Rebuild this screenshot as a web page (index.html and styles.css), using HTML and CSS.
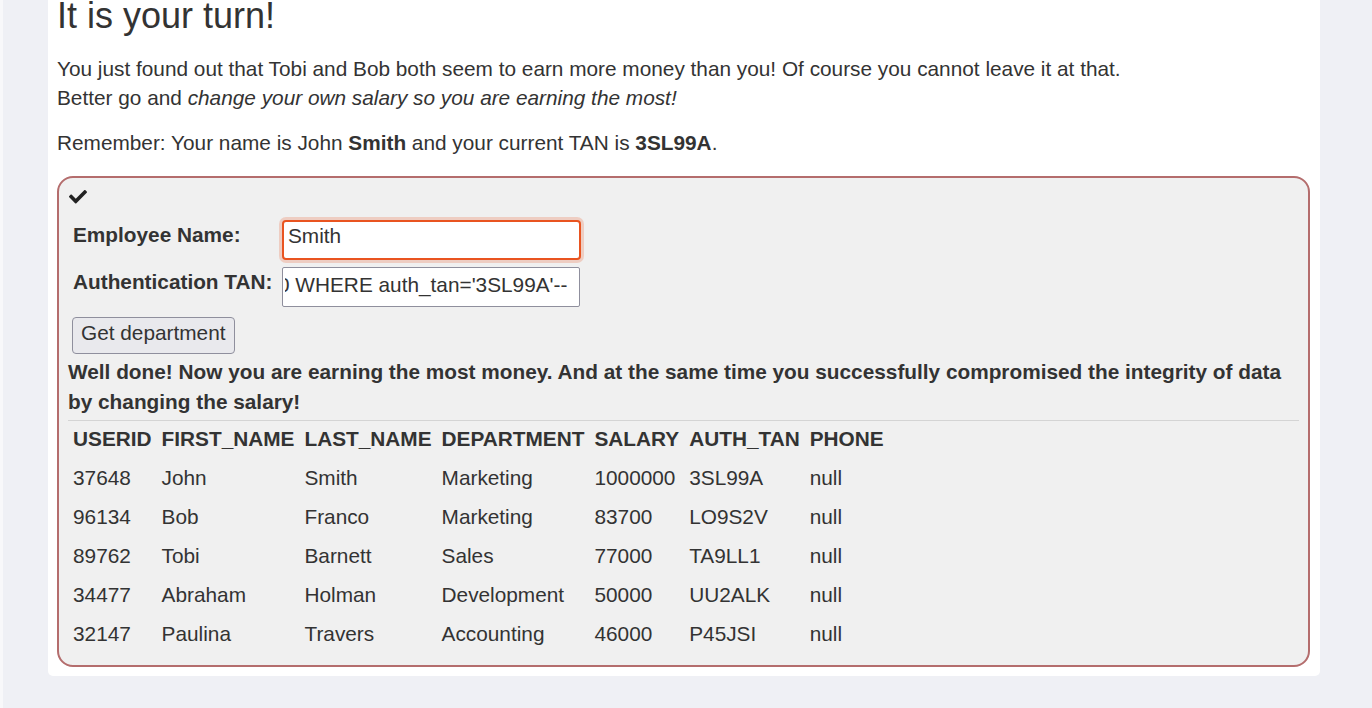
FILE: index.html
```html
<!DOCTYPE html>
<html lang="en">
<head>
<meta charset="utf-8">
<title>It is your turn!</title>
<link rel="stylesheet" href="styles.css">
</head>
<body>
<div class="page">
  <h1 class="title">It is your turn!</h1>
  <p class="intro">You just found out that Tobi and Bob both seem to earn more money than you! Of course you cannot leave it at that.<br>Better go and <em>change your own salary so you are earning the most!</em></p>
  <p class="intro">Remember: Your name is John <b>Smith</b> and your current TAN is <b>3SL99A</b>.</p>

  <div class="attack">
    <div class="check">
      <svg class="check-icon" viewBox="0 64 512 384" width="18" height="13.5" aria-hidden="true"><path fill="#222" d="M173.898 439.404l-166.4-166.4c-9.997-9.997-9.997-26.206 0-36.204l36.203-36.204c9.997-9.998 26.207-9.998 36.204 0L192 312.69 432.095 72.596c9.997-9.997 26.207-9.997 36.204 0l36.203 36.204c9.997 9.997 9.997 26.206 0 36.204l-294.4 294.401c-9.998 9.997-26.207 9.997-36.204-.001z"/></svg>
    </div>
    <form class="form">
      <div class="form-row">
        <label class="label" for="name">Employee Name:</label>
        <input class="field field-focus" id="name" type="text" value="Smith">
      </div>
      <div class="form-row row-gap">
        <label class="label" for="tan">Authentication TAN:</label>
        <input class="field field-plain" id="tan" type="text" value="0 WHERE auth_tan='3SL99A'--">
      </div>
      <button class="btn" type="button">Get department</button>
    </form>
    <div class="feedback">Well done! Now you are earning the most money. And at the same time you successfully compromised the integrity of data by changing the salary!</div>
    <hr class="rule">
    <table class="results">
      <thead>
        <tr><th>USERID</th><th>FIRST_NAME</th><th>LAST_NAME</th><th>DEPARTMENT</th><th>SALARY</th><th>AUTH_TAN</th><th>PHONE</th></tr>
      </thead>
      <tbody>
        <tr><td>37648</td><td>John</td><td>Smith</td><td>Marketing</td><td>1000000</td><td>3SL99A</td><td>null</td></tr>
        <tr><td>96134</td><td>Bob</td><td>Franco</td><td>Marketing</td><td>83700</td><td>LO9S2V</td><td>null</td></tr>
        <tr><td>89762</td><td>Tobi</td><td>Barnett</td><td>Sales</td><td>77000</td><td>TA9LL1</td><td>null</td></tr>
        <tr><td>34477</td><td>Abraham</td><td>Holman</td><td>Development</td><td>50000</td><td>UU2ALK</td><td>null</td></tr>
        <tr><td>32147</td><td>Paulina</td><td>Travers</td><td>Accounting</td><td>46000</td><td>P45JSI</td><td>null</td></tr>
      </tbody>
    </table>
  </div>
</div>
</body>
</html>
```

FILE: styles.css
```css
html, body {
  margin: 0;
  padding: 0;
}

body {
  background: #eff0f5;
  border-left: 3px solid #f8f8fa;
  min-height: 708px;
  box-sizing: border-box;
  font-family: "Liberation Sans", Arial, sans-serif;
  font-size: 20.8px;
  line-height: 29px;
  color: #333;
  overflow: hidden;
}

.page {
  margin-left: 45px;
  width: 1272px;
  box-sizing: border-box;
  background: #fff;
  border-radius: 0 0 5px 5px;
  padding: 0 10px 9px 9px;
}

.title {
  margin: -4px 0 0 0;
  font-size: 36px;
  line-height: 40px;
  font-weight: normal;
  color: #333;
}

.intro {
  margin: 18px 0 0 0;
}

.intro + .intro {
  margin-top: 16px;
}

.attack {
  margin-top: 19px;
  border: 2px solid #b46d6d;
  border-radius: 16px;
  background: #f0f0f0;
  padding: 9px 9px 12px 9px;
}

.check {
  height: 30px;
}

.check-icon {
  display: block;
  margin: 3px 0 0 1px;
}

.form {
  margin: 0;
}

.form-row {
  display: flex;
  align-items: flex-start;
}

.row-gap {
  margin-top: 7px;
}

.label {
  width: 214px;
  box-sizing: border-box;
  padding-left: 5px;
  font-weight: bold;
  line-height: 29px;
}

.field {
  box-sizing: border-box;
  height: 40px;
  margin: 0;
  font-family: "Liberation Sans", Arial, sans-serif;
  font-size: 20.8px;
  color: #333;
  background: #fff;
  outline: none;
}

.field-focus {
  width: 299px;
  border: 2px solid #e95420;
  border-radius: 4px;
  box-shadow: 0 0 0 3px rgba(233, 84, 32, 0.22);
  padding: 0 4px 9px 4px;
}

.field-plain {
  width: 298px;
  border: 1px solid #8f8f9d;
  border-radius: 2px;
  padding: 0 2px 4px 2px;
  text-indent: -7px;
}

.btn {
  display: block;
  margin: 10px 0 0 4px;
  height: 37px;
  box-sizing: border-box;
  padding: 0 8px 6px 8px;
  border: 1px solid #8f8f9d;
  border-radius: 4px;
  background: #e9e9ed;
  font-family: "Liberation Sans", Arial, sans-serif;
  font-size: 20.8px;
  color: #333;
}

.feedback {
  margin-top: 3px;
  font-weight: bold;
  line-height: 30px;
}

.rule {
  margin: 3px 0 0 0;
  border: 0;
  border-top: 1px solid #d4d4d4;
  height: 0;
}

.results {
  border-collapse: collapse;
}

.results th,
.results td {
  text-align: left;
  padding: 5px 5px;
  line-height: 29px;
  white-space: nowrap;
}

.results th {
  font-weight: bold;
  padding-top: 3px;
}
```
